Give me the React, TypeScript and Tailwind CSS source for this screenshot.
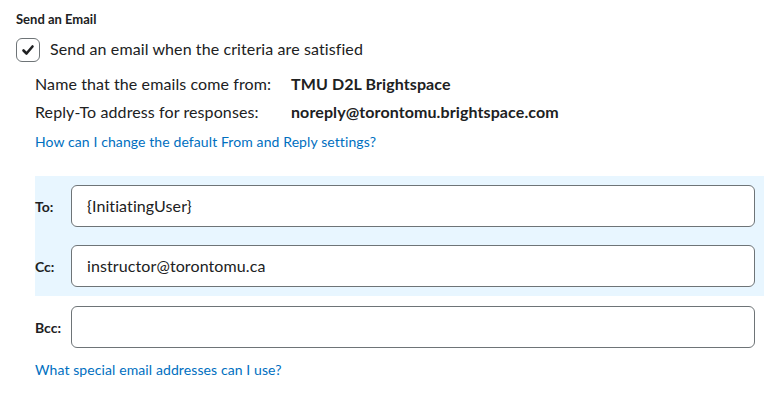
import React from "react";

const font = { fontFamily: "Lato, 'Noto Sans', sans-serif" };

function Field({ label, value }: { label: string; value: string }) {
  return (
    <div className="flex items-center h-[42px]">
      <div className="w-[36px] text-[14px] font-bold text-[#202122]">{label}</div>
      <div className="w-[684px] h-[42px] bg-white border border-[#6e7477] rounded-[6px] pl-[15px] flex items-center text-[16px] text-[#202122] tracking-[0.1px]">
        {value}
      </div>
    </div>
  );
}

export default function App() {
  return (
    <div className="w-[764px] h-[397px] bg-white text-[#202122]" style={font}>
      <div className="pt-[10px] pl-[16px] text-[13px] font-bold leading-[18px]">Send an Email</div>
      <div className="flex items-center pl-[16px] mt-[10px] h-[24px]">
        <div className="w-[24px] h-[24px] border border-[#6e7477] rounded-[6px] flex items-center justify-center bg-white">
          <svg width="14" height="14" viewBox="0 0 14 14">
            <path d="M2.5 7.5 L5.5 10.5 L11.5 3.5" fill="none" stroke="#202122" strokeWidth="2.6" strokeLinecap="round" strokeLinejoin="round" />
          </svg>
        </div>
        <span className="ml-[10px] text-[16px] tracking-[0.1px] leading-[20px] -mt-[3px]">Send an email when the criteria are satisfied</span>
      </div>
      <div className="pl-[35px] mt-[8px] text-[16px] tracking-[0.1px]">
        <div className="flex h-[28px] items-center">
          <span className="w-[256px]">Name that the emails come from:</span>
          <span className="font-bold">TMU D2L Brightspace</span>
        </div>
        <div className="flex h-[28px] items-center">
          <span className="w-[256px]">Reply-To address for responses:</span>
          <span className="font-bold">noreply@torontomu.brightspace.com</span>
        </div>
        <div className="h-[30px] flex items-center text-[14px] text-[#006fbf] tracking-[0.1px]">
          How can I change the default From and Reply settings?
        </div>
      </div>
      <div className="ml-[35px] mt-[20px] bg-[#e8f6ff] pt-[9px] pb-[9px] flex flex-col gap-[18px]">
        <Field label="To:" value="{InitiatingUser}" />
        <Field label="Cc:" value="instructor@torontomu.ca" />
      </div>
      <div className="ml-[35px] mt-[10px]">
        <Field label="Bcc:" value="" />
      </div>
      <div className="pl-[35px] mt-[12px] text-[14px] text-[#006fbf] leading-[20px] tracking-[0.1px]">
        What special email addresses can I use?
      </div>
    </div>
  );
}
